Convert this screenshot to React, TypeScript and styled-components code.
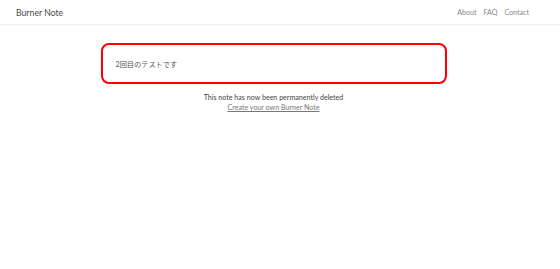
import React from "react";
import styled, { createGlobalStyle } from "styled-components";

const GlobalStyle = createGlobalStyle`
  html, body {
    margin: 0;
    padding: 0;
    background: #ffffff;
  }
  body {
    font-family: Lato, "Noto Sans CJK JP", sans-serif;
    color: #444444;
  }
`;

const Navbar = styled.nav`
  height: 24px;
  display: flex;
  align-items: center;
  justify-content: space-between;
  padding: 0 31px 0 16px;
  border-bottom: 1px solid #f0f0f0;
  box-shadow: 0 1px 2px rgba(0, 0, 0, 0.03);
`;

const Brand = styled.a`
  font-size: 8.7px;
  color: #4a4a4a;
  text-decoration: none;
`;

const NavLinks = styled.div`
  display: flex;
  gap: 7px;
`;

const NavLink = styled.a`
  font-size: 7.1px;
  color: #888888;
  text-decoration: none;
`;

const Main = styled.main`
  display: flex;
  flex-direction: column;
  align-items: center;
  padding: 18px 13px 0 0;
`;

const NoteCard = styled.div`
  box-sizing: border-box;
  width: 346px;
  height: 41px;
  border: 2px solid #ff0000;
  border-radius: 8px;
  display: flex;
  align-items: center;
  padding: 0 13px;
  font-size: 7.2px;
  color: #555555;
`;

const Message = styled.p`
  margin: 9px 0 0;
  font-size: 7.1px;
  color: #444444;
`;

const CreateLink = styled.a`
  margin-top: 1px;
  font-size: 7.1px;
  color: #777777;
  text-decoration: underline;
`;

export default function App() {
  return (
    <>
      <GlobalStyle />
      <Navbar>
        <Brand href="#">Burner Note</Brand>
        <NavLinks>
          <NavLink href="#">About</NavLink>
          <NavLink href="#">FAQ</NavLink>
          <NavLink href="#">Contact</NavLink>
        </NavLinks>
      </Navbar>
      <Main>
        <NoteCard>2回目のテストです</NoteCard>
        <Message>This note has now been permanently deleted</Message>
        <CreateLink href="#">Create your own Burner Note</CreateLink>
      </Main>
    </>
  );
}
